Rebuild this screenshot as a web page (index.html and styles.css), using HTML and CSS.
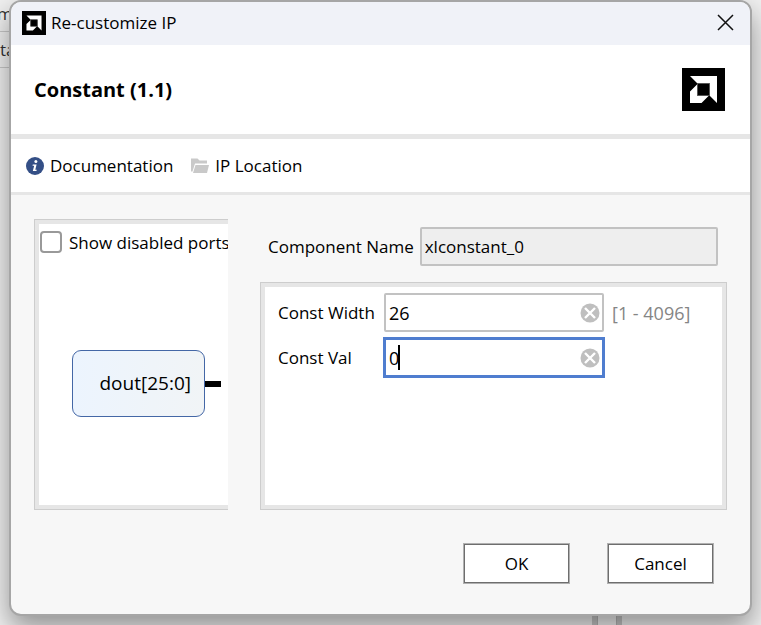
FILE: index.html
```html
<!DOCTYPE html>
<html lang="en">
<head>
<meta charset="utf-8">
<title>Re-customize IP</title>
<link rel="stylesheet" href="styles.css">
</head>
<body>
<div class="backdrop" aria-hidden="true">
  <div class="backdrop-rows"><span>m</span><span>ta</span></div>
  <div class="splitter"></div>
</div>
<svg class="defs" width="0" height="0" aria-hidden="true">
  <symbol id="logo" viewBox="0 0 43 43">
    <path d="M0 0h43v43H0z" fill="#000"/>
    <path d="M8 8h27v27l-7.500-7.500V15.500H15.500z" fill="#fff"/>
    <path d="M8 23.500l7.500-7.500v11.500h11.500L19.500 35H8z" fill="#fff"/>
    <path d="M15.500 15.500h12v12h-12z" fill="#000" stroke="#555"/>
  </symbol>
  <symbol id="clear" viewBox="0 0 20 20">
    <circle cx="10" cy="10" r="9.500" fill="#bfbfbf"/>
    <path d="M5 5l10 10M15 5l-10 10" stroke="#fff" stroke-width="2.400"/>
  </symbol>
</svg>
<main class="dialog">
  <div class="titlebar">
    <svg class="title-logo"><use href="#logo"/></svg>
    <span class="title">Re-customize IP</span>
    <button class="close" type="button" aria-label="Close">
      <svg width="17" height="17" viewBox="0 0 17 17"><path d="M1 1l15 15M16 1L1 16" stroke="#111" stroke-width="1.500"/></svg>
    </button>
  </div>
  <header class="header">
    <h1>Constant (1.1)</h1>
    <svg class="brand"><use href="#logo"/></svg>
  </header>
  <nav class="toolbar">
    <a href="#documentation">
      <svg width="18" height="18" viewBox="0 0 18 18"><circle cx="9" cy="9" r="9" fill="#344f86"/><circle cx="9.900" cy="4.600" r="1.500" fill="#fff"/><path d="M6.800 7.500h3.800L9.300 12.700h1.500l-.4 1.300H6.800L8.200 8.800H6.500z" fill="#fff"/></svg>
      <span>Documentation</span>
    </a>
    <a href="#location">
      <svg width="18" height="18" viewBox="0 0 18 18"><path d="M0 1.500h6.500l2 2H16v3H4L1.500 14.500H0z" fill="#c9c9c9"/><path d="M4.500 8H18l-2 8H2z" fill="#c9c9c9"/></svg>
      <span>IP Location</span>
    </a>
  </nav>
  <form class="content">
    <section class="panel preview">
      <label class="check"><input type="checkbox"><span>Show disabled ports</span></label>
      <div class="diagram">
        <div class="block">dout[25:0]</div>
        <div class="port"></div>
      </div>
    </section>
    <section class="settings">
      <div class="name-row">
        <label for="name">Component Name</label>
        <input class="text" id="name" type="text" value="xlconstant_0" readonly>
      </div>
      <div class="panel params">
        <label for="width">Const Width</label>
        <div class="field">
          <input class="text" id="width" type="text" value="26">
          <button class="clear" type="button" aria-label="Clear width"><svg><use href="#clear"/></svg></button>
        </div>
        <span class="range">[1 - 4096]</span>
        <label for="val">Const Val</label>
        <div class="field active">
          <input class="text" id="val" type="text" value="0">
          <span class="caret"></span>
          <button class="clear" type="button" aria-label="Clear value"><svg><use href="#clear"/></svg></button>
        </div>
      </div>
    </section>
    <div class="actions">
      <button type="button">OK</button>
      <button type="button">Cancel</button>
    </div>
  </form>
</main>
</body>
</html>
```
FILE: styles.css
```css
* { box-sizing: border-box; }

body {
  margin: 0;
  padding: 0 9px;
  min-height: 100vh;
  overflow: hidden;
  background: #f0f0f0;
  color: #000;
  font: 17px/24px "Open Sans", "Noto Sans", sans-serif;
}

button, input { font: inherit; color: inherit; }
svg { display: block; }
.defs { position: absolute; }

.backdrop {
  position: absolute;
  inset: 0;
  display: flex;
  justify-content: space-between;
  overflow: hidden;
}
.backdrop-rows span {
  display: block;
  width: 16px;
  height: 36px;
  padding-top: 6px;
  border-bottom: 1px solid #c8c8c8;
  color: #333;
}
.backdrop-rows span:first-child {
  height: 32px;
  padding-top: 2px;
  text-indent: -3px;
}
.splitter {
  width: 30px;
  margin-right: 139px;
  border: solid #c4c4c4;
  border-width: 0 5px;
  box-shadow: inset 1px 0 #b4b4b4, inset -1px 0 #b4b4b4;
}

.dialog {
  position: relative;
  border: 2px solid #a6a6a6;
  border-radius: 12px;
  overflow: hidden;
  background: #f7f7f7;
  box-shadow: 0 12px 28px rgba(0, 0, 0, .4);
}

.titlebar {
  display: flex;
  align-items: center;
  gap: 5px;
  height: 43px;
  padding: 0 16px 2px 11px;
  background: #f0f2f8;
}
.title-logo { width: 24px; height: 24px; }
.close {
  margin-left: auto;
  padding: 0;
  border: 0;
  background: none;
}

.header {
  display: flex;
  align-items: center;
  justify-content: space-between;
  height: 94px;
  padding: 0 25px 0 23px;
  background: #fff;
  border-bottom: 5px solid #e6e6e6;
}
.header h1 { margin: 0; font-size: 20px; font-weight: 700; }
.brand { width: 43px; height: 43px; }

.toolbar {
  display: flex;
  align-items: center;
  gap: 18px;
  height: 56px;
  padding: 0 15px;
  background: #fff;
  border-bottom: 3px solid #e6e6e6;
}
.toolbar a {
  display: flex;
  align-items: center;
  gap: 6px;
  color: inherit;
  text-decoration: none;
}

.content {
  display: grid;
  grid-template-columns: 194px 1fr;
  column-gap: 32px;
  padding: 24px 23px 30px;
}

.panel {
  background: #fff;
  border: 1px solid #cdcdcd;
  box-shadow: inset 0 0 0 4px #e6e6e6;
}
.preview {
  height: 291px;
  padding: 11px 0 5px 5px;
  overflow: hidden;
  border-right: 0;
  box-shadow: inset 4px 0 #e6e6e6, inset 0 4px #e6e6e6, inset 0 -4px #e6e6e6;
}
.check {
  display: flex;
  gap: 7px;
  white-space: nowrap;
}
.check input {
  appearance: none;
  flex: none;
  width: 22px;
  height: 22px;
  margin: 0;
  border: 2px solid #999;
  border-radius: 4px;
  background: #fff;
}
.diagram {
  display: flex;
  align-items: center;
  margin: 95px 7px 0 32px;
}
.block {
  flex: 1;
  height: 67px;
  padding-right: 13px;
  border: 1px solid #4467a6;
  border-radius: 9px;
  background: linear-gradient(90deg, #ecf4fe, #f1f4f6);
  font-size: 19px;
  line-height: 65px;
  text-align: right;
}
.port { width: 16px; height: 6px; background: #000; }

.settings {
  display: flex;
  flex-direction: column;
  gap: 16px;
  padding-top: 8px;
}
.name-row {
  display: flex;
  align-items: center;
  gap: 6px;
  padding: 0 9px 0 8px;
}
.text {
  width: 100%;
  height: 39px;
  padding: 0 3px;
  border: 2px solid #c2c2c2;
  border-radius: 2px;
  outline: 0;
  background: #fff;
}
.name-row label { white-space: nowrap; }
.name-row .text { flex: 1; min-width: 0; background: #eee; }

.params {
  flex: 1;
  display: grid;
  grid-template-columns: 98px 1fr 104px;
  grid-auto-rows: 39px;
  align-items: center;
  align-content: start;
  gap: 6px 8px;
  padding: 10px 10px 10px 17px;
}
.params label { white-space: nowrap; }
.field { position: relative; font-size: 18px; }
.active { margin: 0 -1px; }
.active .text {
  display: block;
  height: 41px;
  border: 3px solid #4f7dcf;
  border-radius: 0;
}
.clear {
  position: absolute;
  top: 50%;
  right: 4px;
  width: 20px;
  height: 20px;
  margin-top: -10px;
  padding: 0;
  border: 0;
  background: none;
}
.clear svg { width: 20px; height: 20px; }
.active .clear { right: 5px; }
.caret {
  position: absolute;
  left: 15px;
  top: 8px;
  width: 2px;
  height: 25px;
  background: #000;
}
.range { color: #858585; font-size: 18px; white-space: nowrap; }

.actions {
  grid-column: 1 / -1;
  display: flex;
  justify-content: flex-end;
  gap: 37px;
  padding: 33px 13px 0 0;
}
.actions button {
  width: 107px;
  height: 41px;
  padding: 0;
  border: 1px solid #b0b0b0;
  box-shadow: inset 0 0 0 1px #6e6e6e;
  background: #fff;
}
```
